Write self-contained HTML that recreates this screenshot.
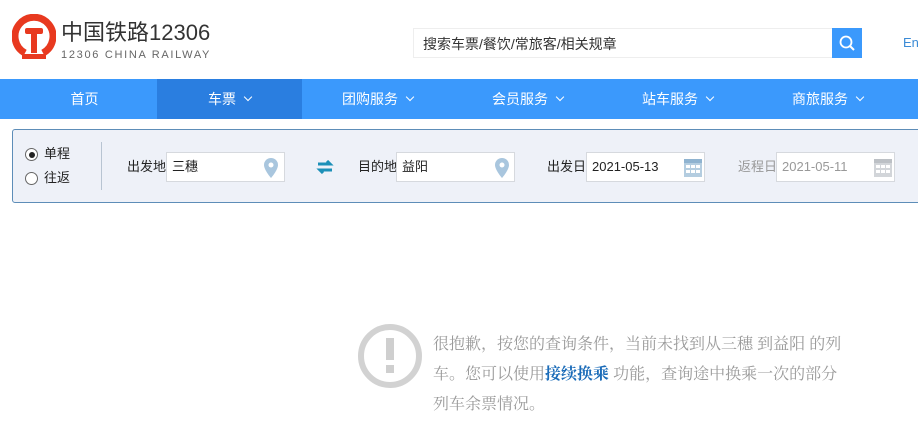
<!DOCTYPE html>
<html><head><meta charset="utf-8"><style>
*{margin:0;padding:0;box-sizing:border-box}
body{width:918px;height:446px;overflow:hidden;background:#fff;font-family:"Liberation Sans","Noto Sans CJK SC",sans-serif;position:relative}
.a{position:absolute}
.nav{top:79px;left:0;width:918px;height:40px;background:#3b99fc}
.nav div{position:absolute;top:0;height:40px;line-height:40px;color:#fff;font-size:14px;text-align:center;width:145px}
.nav .on{background:#2a7ee0}
.chev{display:inline-block;width:6px;height:6px;border-right:1.5px solid #fff;border-bottom:1.5px solid #fff;transform:rotate(45deg);margin-left:9px;position:relative;top:-4px}
.box{top:129px;left:12px;width:920px;height:74px;background:#eef1f8;border:1px solid #5d8db8;border-radius:3px}
.lbl{font-size:13px;color:#222;line-height:16px}
.inp{height:30px;background:#fff;border:1px solid #d6d9de;font-size:13px;line-height:28px;padding-left:5px;color:#222}
.msg{left:433px;top:328px;width:420px;font-size:16px;line-height:30px;color:#9a9a9a;font-family:"Noto Serif CJK SC",serif}
</style></head><body>
<svg class="a" style="left:12px;top:14px" width="44" height="50" viewBox="0 0 44 50">
<path d="M13 39A19 19 0 1 1 31 39" fill="none" stroke="#e8391f" stroke-width="7"/>
<rect x="13" y="14" width="18" height="6" rx="2" fill="#e8391f"/>
<rect x="19" y="19" width="6" height="20" fill="#e8391f"/>
<rect x="10" y="40" width="24" height="5" fill="#e8391f"/>
</svg>
<div class="a" style="left:61px;top:21px;font-size:22px;line-height:24px;color:#333">中国铁路12306</div>
<div class="a" style="left:61px;top:49px;font-size:11px;line-height:12px;color:#666;letter-spacing:1.7px">12306 CHINA RAILWAY</div>
<div class="a" style="left:413px;top:28px;width:420px;height:30px;background:#fff;border:1px solid #eee;font-size:14px;line-height:30px;padding-left:9px;color:#333">搜索车票/餐饮/常旅客/相关规章</div>
<div class="a" style="left:832px;top:28px;width:30px;height:30px;background:#3b99fc"><svg width="30" height="30"><circle cx="14" cy="14" r="5.5" fill="none" stroke="#fff" stroke-width="1.8"/><path d="M18 18l4 4" stroke="#fff" stroke-width="2"/></svg></div>
<div class="a" style="left:903px;top:35px;font-size:13px;color:#3b8bd6">En</div>
<div class="a nav">
<div style="left:12px">首页</div>
<div class="on" style="left:157px">车票<span class="chev"></span></div>
<div style="left:305px">团购服务<span class="chev"></span></div>
<div style="left:455px">会员服务<span class="chev"></span></div>
<div style="left:605px">站车服务<span class="chev"></span></div>
<div style="left:755px">商旅服务<span class="chev"></span></div>
</div>
<div class="a box"></div>
<div class="a" style="left:25px;top:148px;width:13px;height:13px;border:1px solid #666;border-radius:50%;background:#fff"><div style="margin:2.5px;width:6px;height:6px;border-radius:50%;background:#222"></div></div>
<div class="a lbl" style="left:44px;top:146px">单程</div>
<div class="a" style="left:25px;top:172px;width:13px;height:13px;border:1px solid #666;border-radius:50%;background:#fff"></div>
<div class="a lbl" style="left:44px;top:170px">往返</div>
<div class="a" style="left:101px;top:142px;width:1px;height:48px;background:#b8c4d2"></div>
<div class="a lbl" style="left:127px;top:159px">出发地</div>
<div class="a inp" style="left:166px;top:152px;width:119px">三穗</div>
<svg class="a" style="left:263px;top:157px" width="16" height="22"><path d="M8 1a7 7 0 0 0-7 7c0 5 7 13 7 13s7-8 7-13a7 7 0 0 0-7-7z" fill="#a9c6de"/><circle cx="8" cy="8" r="2.5" fill="#fff"/></svg>
<svg class="a" style="left:316px;top:160px" width="18" height="14"><path d="M2 4h12l-3-3M16 10H4l3 3" fill="none" stroke="#1c90b8" stroke-width="3"/></svg>
<div class="a lbl" style="left:358px;top:159px">目的地</div>
<div class="a inp" style="left:396px;top:152px;width:119px">益阳</div>
<svg class="a" style="left:494px;top:157px" width="16" height="22"><path d="M8 1a7 7 0 0 0-7 7c0 5 7 13 7 13s7-8 7-13a7 7 0 0 0-7-7z" fill="#a9c6de"/><circle cx="8" cy="8" r="2.5" fill="#fff"/></svg>
<div class="a lbl" style="left:547px;top:159px">出发日</div>
<div class="a inp" style="left:586px;top:152px;width:119px">2021-05-13</div>
<svg class="a" style="left:683px;top:156px" width="20" height="22"><rect x="1" y="3" width="18" height="18" fill="#b4cde0"/><rect x="1" y="3" width="18" height="4" fill="#8fb3d0"/><g fill="#fff"><rect x="3" y="9" width="4" height="3"/><rect x="8" y="9" width="4" height="3"/><rect x="13" y="9" width="4" height="3"/><rect x="3" y="14" width="4" height="3"/><rect x="8" y="14" width="4" height="3"/><rect x="13" y="14" width="4" height="3"/></g></svg>
<div class="a lbl" style="left:738px;top:159px;color:#999">返程日</div>
<div class="a inp" style="left:776px;top:152px;width:119px;color:#999">2021-05-11</div>
<svg class="a" style="left:873px;top:156px" width="20" height="22"><rect x="1" y="3" width="18" height="18" fill="#d2d5d9"/><rect x="1" y="3" width="18" height="4" fill="#bcc0c5"/><g fill="#fff"><rect x="3" y="9" width="4" height="3"/><rect x="8" y="9" width="4" height="3"/><rect x="13" y="9" width="4" height="3"/><rect x="3" y="14" width="4" height="3"/><rect x="8" y="14" width="4" height="3"/><rect x="13" y="14" width="4" height="3"/></g></svg>
<svg class="a" style="left:356px;top:322px" width="68" height="68"><circle cx="34" cy="34" r="29" fill="none" stroke="#d2d2d2" stroke-width="6"/><rect x="30" y="16" width="8" height="22" fill="#cfcfcf"/><rect x="30" y="43" width="8" height="8" fill="#cfcfcf"/></svg>
<div class="a msg">很抱歉，按您的查询条件，当前未找到从三穗 到益阳 的列车。您可以使用<span style="color:#1a6bb8;font-weight:bold">接续换乘</span> 功能，查询途中换乘一次的部分列车余票情况。</div>
</body></html>
